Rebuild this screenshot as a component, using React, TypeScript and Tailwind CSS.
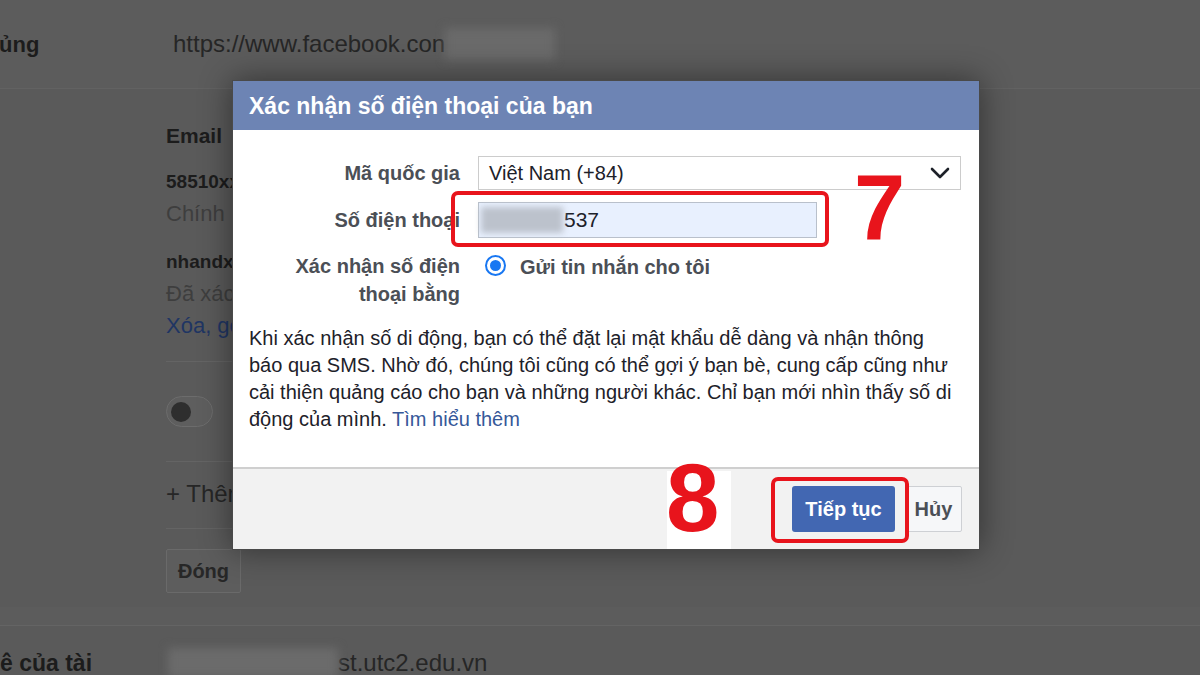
import React from "react";

function Chevron() {
  return (
    <svg width="20" height="12" viewBox="0 0 20 12" fill="none">
      <polyline points="2,2 10,10 18,2" stroke="#1d2129" strokeWidth="2.6" strokeLinecap="round" strokeLinejoin="round" />
    </svg>
  );
}

function BackgroundPage() {
  return (
    <div className="flex flex-col w-full h-full bg-[#5a5a5a] text-[#1c1c1c]">
      {/* username row */}
      <div className="h-[89px] flex items-center border-b border-[#626262] bg-[#5c5c5c] shrink-0">
        <div className="w-[174px] ml-[-1px] text-[22px] font-bold">ủng</div>
        <div className="flex items-center text-[24px] text-[#262626]">
          <span>https://www.facebook.con</span>
          <span className="w-[110px] h-[32px] bg-[#6a6a6a] blur-[5px]" />
        </div>
      </div>

      {/* contact section */}
      <div className="pl-[166px] pt-[33px] flex flex-col shrink-0">
        <div className="text-[21px] leading-[28px] font-bold">Email</div>
        <div className="mt-[16px] text-[19px] leading-[32px] font-bold">58510xxxxx</div>
        <div className="text-[22px] leading-[32px] text-[#3e3e3e]">Chính</div>
        <div className="mt-[16px] text-[19px] leading-[32px] font-bold">nhandxx</div>
        <div className="text-[22px] leading-[32px] text-[#3e3e3e]">Đã xác</div>
        <div className="text-[22px] leading-[32px] text-[#1f3563]">Xóa, gỡ</div>
        <div className="mt-[19px] w-[700px] border-t border-[#646464]" />
        <div className="mt-[34px] w-[47px] h-[31px] rounded-full border border-[#6c6c6c] bg-[#5e5e5e] flex items-center pl-[4px]">
          <div className="w-[20px] h-[20px] rounded-full bg-[#2e2e2e]" />
        </div>
        <div className="mt-[34px] w-[700px] border-t border-[#646464]" />
        <div className="mt-[16px] text-[24px] leading-[32px] text-[#262626]">+ Thêm</div>
        <div className="mt-[18px] w-[700px] border-t border-[#646464]" />
        <div className="mt-[20px] w-[75px] h-[44px] border border-[#6a6a6a] bg-[#5d5d5d] rounded-[2px] flex items-center justify-center text-[20px] font-bold text-[#272727]">
          Đóng
        </div>
      </div>

      <div className="mt-[14px] h-[19px] bg-[#5c5c5c] border-b border-[#646464] shrink-0" />

      {/* account row */}
      <div className="mt-[22px] flex items-center h-[30px] shrink-0">
        <div className="w-[168px] text-[23px] font-bold">ê của tài</div>
        <span className="w-[170px] h-[30px] bg-[#6b6b6b] blur-[5px]" />
        <span className="text-[24px] text-[#262626]">st.utc2.edu.vn</span>
      </div>
    </div>
  );
}

function Dialog() {
  return (
    <div className="absolute left-[232px] top-[80px] w-[748px] bg-white shadow-[0_0_30px_rgba(0,0,0,0.45)] border border-[#4a4a4a]">
      {/* header */}
      <div className="h-[49px] bg-[#6d84b4] flex items-center pl-[16px] pt-[2px] text-[23px] font-bold text-white">
        Xác nhận số điện thoại của bạn
      </div>

      {/* body */}
      <div className="pt-[26px] pl-[16px] pr-[18px] pb-[34px]">
        <div className="grid grid-cols-[211px_1fr] gap-x-[18px]">
          <div className="h-[34px] flex items-center justify-end text-[20px] font-bold text-[#4b4f56]">Mã quốc gia</div>
          <div className="h-[34px] border border-[#cccccc] flex items-center justify-between pl-[10px] pr-[10px] text-[20px] text-[#1d2129]">
            <span>Việt Nam (+84)</span>
            <Chevron />
          </div>

          <div className="mt-[12px] h-[36px] flex items-center justify-end text-[20px] font-bold text-[#4b4f56]">Số điện thoại</div>
          <div className="mt-[12px] w-[339px] h-[36px] border border-[#b9c0cb] bg-[#e8f0fe] flex items-center pl-[2px] text-[21px] text-[#1d2129]">
            <span className="w-[82px] h-[26px] bg-[#bcc2cc] blur-[3px]" />
            <span className="ml-[1px]">537</span>
          </div>

          <div className="mt-[14px] text-right text-[20px] leading-[28px] font-bold text-[#4b4f56]">
            Xác nhận số điện
            <br />
            thoại bằng
          </div>
          <div className="mt-[14px] flex items-start">
            <div className="mt-[3px] ml-[7px] w-[21px] h-[21px] rounded-full border-2 border-[#1877f2] flex items-center justify-center">
              <div className="w-[11px] h-[11px] rounded-full bg-[#1877f2]" />
            </div>
            <span className="ml-[14px] mt-[1px] text-[20px] leading-[28px] font-bold text-[#4b4f56]">Gửi tin nhắn cho tôi</span>
          </div>
        </div>

        <p className="mt-[17px] text-[20px] leading-[27px] text-[#1d2129]">
          Khi xác nhận số di động, bạn có thể đặt lại mật khẩu dễ dàng và nhận thông
          <br />
          báo qua SMS. Nhờ đó, chúng tôi cũng có thể gợi ý bạn bè, cung cấp cũng như
          <br />
          cải thiện quảng cáo cho bạn và những người khác. Chỉ bạn mới nhìn thấy số di
          <br />
          động của mình. <span className="text-[#365899]">Tìm hiểu thêm</span>
        </p>
      </div>

      {/* footer */}
      <div className="h-[82px] bg-[#f2f2f2] border-t-2 border-[#cfcfcf] flex items-center justify-end pr-[17px] gap-[10px]">
        <div className="w-[103px] h-[46px] rounded-[3px] bg-[#4267b2] flex items-center justify-center text-[20px] font-bold text-white">
          Tiếp tục
        </div>
        <div className="w-[57px] h-[46px] rounded-[2px] bg-[#f6f7f9] border border-[#ced0d4] flex items-center justify-center text-[20px] font-bold text-[#4b4f56]">
          Hủy
        </div>
      </div>

      {/* step markers */}
      <div className="absolute left-[218px] top-[110px] w-[378px] h-[56px] border-[4px] border-[#e8141c] rounded-[7px]" />
      <div className="absolute left-[621px] top-[80px] text-[92px] leading-none font-bold text-[#e8141c]">7</div>

      <div className="absolute left-[434px] top-[390px] w-[64px] h-[78px] bg-white" />
      <div className="absolute left-[433px] top-[369px] text-[96px] leading-none font-bold text-[#e8141c]">8</div>
      <div className="absolute left-[538px] top-[396px] w-[138px] h-[66px] border-[4px] border-[#e8141c] rounded-[7px]" />
    </div>
  );
}

export default function App() {
  return (
    <div className="relative w-[1200px] h-[675px] overflow-hidden font-['Liberation_Sans',Arial,sans-serif]">
      <BackgroundPage />
      <Dialog />
    </div>
  );
}
